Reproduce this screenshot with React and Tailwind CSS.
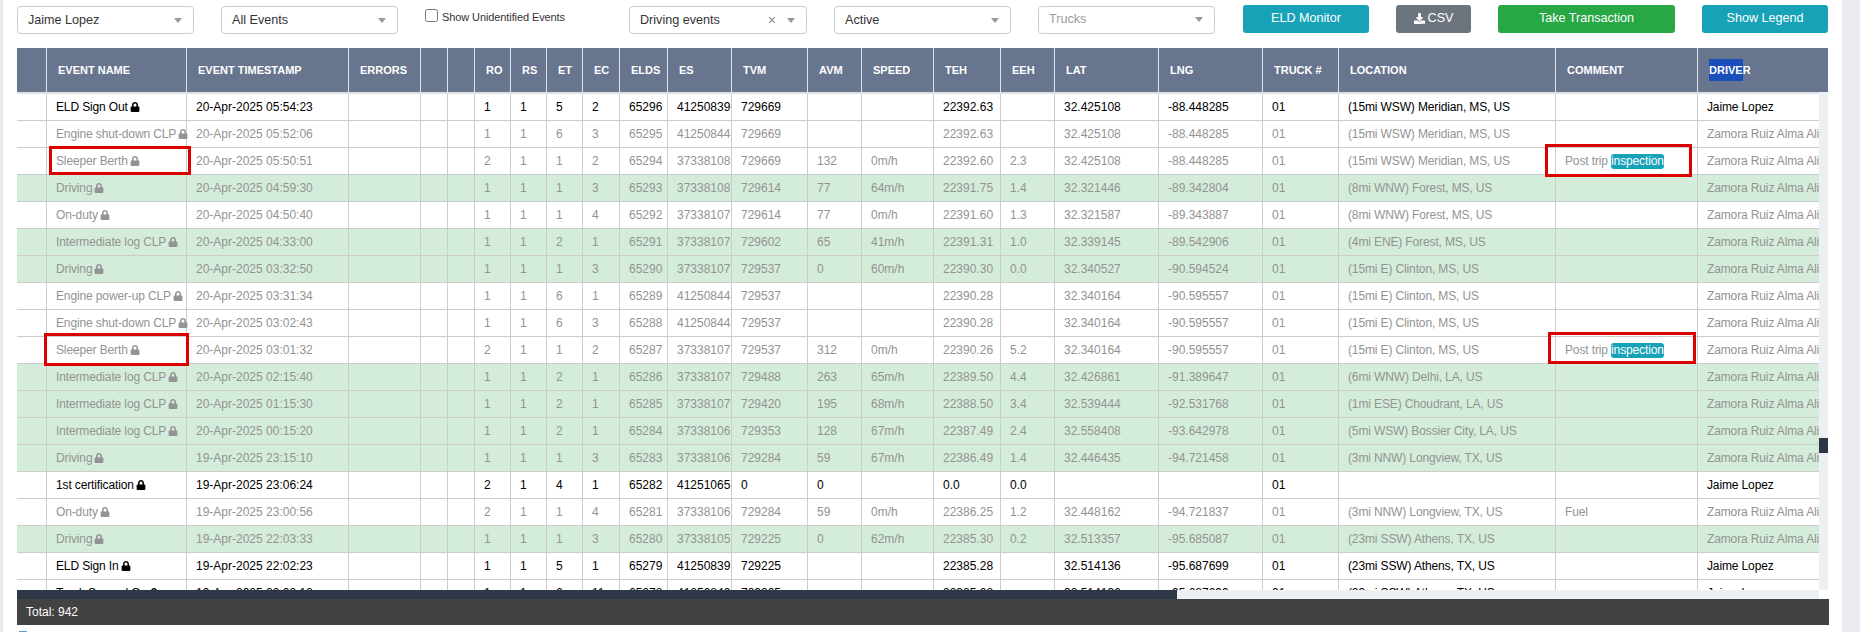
import React from "react";
import { FaLock, FaDownload } from "react-icons/fa";

const Z = "Zamora Ruiz Alma Alicia";
const J = "Jaime Lopez";
const MER = "(15mi WSW) Meridian, MS, US";
const CLI = "(15mi E) Clinton, MS, US";
const INT = "Intermediate log CLP";
const A20 = "20-Apr-2025 ";
const A19 = "19-Apr-2025 ";
const INSP = "__inspection__";

// kind: k = black row, g = grey row on white, s = grey row on green
const rows = [
  ["k", "ELD Sign Out", A20 + "05:54:23", 1, 1, 5, 2, 65296, 41250839, 729669, "", "", "22392.63", "", "32.425108", "-88.448285", MER, "", J],
  ["g", "Engine shut-down CLP", A20 + "05:52:06", 1, 1, 6, 3, 65295, 41250844, 729669, "", "", "22392.63", "", "32.425108", "-88.448285", MER, "", Z],
  ["g", "Sleeper Berth", A20 + "05:50:51", 2, 1, 1, 2, 65294, 37338108, 729669, 132, "0m/h", "22392.60", "2.3", "32.425108", "-88.448285", MER, INSP, Z],
  ["s", "Driving", A20 + "04:59:30", 1, 1, 1, 3, 65293, 37338108, 729614, 77, "64m/h", "22391.75", "1.4", "32.321446", "-89.342804", "(8mi WNW) Forest, MS, US", "", Z],
  ["g", "On-duty", A20 + "04:50:40", 1, 1, 1, 4, 65292, 37338107, 729614, 77, "0m/h", "22391.60", "1.3", "32.321587", "-89.343887", "(8mi WNW) Forest, MS, US", "", Z],
  ["s", INT, A20 + "04:33:00", 1, 1, 2, 1, 65291, 37338107, 729602, 65, "41m/h", "22391.31", "1.0", "32.339145", "-89.542906", "(4mi ENE) Forest, MS, US", "", Z],
  ["s", "Driving", A20 + "03:32:50", 1, 1, 1, 3, 65290, 37338107, 729537, 0, "60m/h", "22390.30", "0.0", "32.340527", "-90.594524", CLI, "", Z],
  ["g", "Engine power-up CLP", A20 + "03:31:34", 1, 1, 6, 1, 65289, 41250844, 729537, "", "", "22390.28", "", "32.340164", "-90.595557", CLI, "", Z],
  ["g", "Engine shut-down CLP", A20 + "03:02:43", 1, 1, 6, 3, 65288, 41250844, 729537, "", "", "22390.28", "", "32.340164", "-90.595557", CLI, "", Z],
  ["g", "Sleeper Berth", A20 + "03:01:32", 2, 1, 1, 2, 65287, 37338107, 729537, 312, "0m/h", "22390.26", "5.2", "32.340164", "-90.595557", CLI, INSP, Z],
  ["s", INT, A20 + "02:15:40", 1, 1, 2, 1, 65286, 37338107, 729488, 263, "65m/h", "22389.50", "4.4", "32.426861", "-91.389647", "(6mi WNW) Delhi, LA, US", "", Z],
  ["s", INT, A20 + "01:15:30", 1, 1, 2, 1, 65285, 37338107, 729420, 195, "68m/h", "22388.50", "3.4", "32.539444", "-92.531768", "(1mi ESE) Choudrant, LA, US", "", Z],
  ["s", INT, A20 + "00:15:20", 1, 1, 2, 1, 65284, 37338106, 729353, 128, "67m/h", "22387.49", "2.4", "32.558408", "-93.642978", "(5mi WSW) Bossier City, LA, US", "", Z],
  ["s", "Driving", A19 + "23:15:10", 1, 1, 1, 3, 65283, 37338106, 729284, 59, "67m/h", "22386.49", "1.4", "32.446435", "-94.721458", "(3mi NNW) Longview, TX, US", "", Z],
  ["k", "1st certification", A19 + "23:06:24", 2, 1, 4, 1, 65282, 41251065, 0, 0, "", "0.0", "0.0", "", "", "", "", J],
  ["g", "On-duty", A19 + "23:00:56", 2, 1, 1, 4, 65281, 37338106, 729284, 59, "0m/h", "22386.25", "1.2", "32.448162", "-94.721837", "(3mi NNW) Longview, TX, US", "Fuel", Z],
  ["s", "Driving", A19 + "22:03:33", 1, 1, 1, 3, 65280, 37338105, 729225, 0, "62m/h", "22385.30", "0.2", "32.513357", "-95.685087", "(23mi SSW) Athens, TX, US", "", Z],
  ["k", "ELD Sign In", A19 + "22:02:23", 1, 1, 5, 1, 65279, 41250839, 729225, "", "", "22385.28", "", "32.514136", "-95.687699", "(23mi SSW) Athens, TX, US", "", J],
  ["k", "Truck Sensed On", A19 + "22:02:12", 1, 1, 6, 11, 65278, 41250840, 729225, "", "", "22385.28", "", "32.514136", "-95.687699", "(23mi SSW) Athens, TX, US", "", J],
];

const heads = [
  ["", "w-[30px]"],
  ["EVENT NAME", "w-[140px]"],
  ["EVENT TIMESTAMP", "w-[162px]"],
  ["ERRORS", "w-[72px]"],
  ["", "w-[27px]"],
  ["", "w-[27px]"],
  ["RO", "w-[36px]"],
  ["RS", "w-[36px]"],
  ["ET", "w-[36px]"],
  ["EC", "w-[37px]"],
  ["ELDS", "w-[48px]"],
  ["ES", "w-[64px]"],
  ["TVM", "w-[76px]"],
  ["AVM", "w-[54px]"],
  ["SPEED", "w-[72px]"],
  ["TEH", "w-[67px]"],
  ["EEH", "w-[54px]"],
  ["LAT", "w-[104px]"],
  ["LNG", "w-[104px]"],
  ["TRUCK #", "w-[76px]"],
  ["LOCATION", "w-[217px]"],
  ["COMMENT", "w-[142px]"],
  ["DRIVER", "w-[200px]"],
];

const Caret = () => (
  <span className="w-0 h-0 border-l-[4px] border-r-[4px] border-t-[5px] border-l-transparent border-r-transparent border-t-[#999999]" />
);

function Select({ value, width, placeholder, clear }) {
  return (
    <div className={`${width} h-[28px] mt-px flex items-center justify-between bg-white border border-[#cccccc] rounded-[4px] pl-[10px] pr-[11px] text-[12.6px] ${placeholder ? "text-[#9b9b9b] pb-[2px]" : "text-[#333333]"}`}>
      <span>{value}</span>
      <span className="flex items-center gap-[11px]">
        {clear && <span className="text-[#888888] text-[14px] leading-none">×</span>}
        <Caret />
      </span>
    </div>
  );
}

function Button({ children, width, color }) {
  return (
    <div className={`${width} ${color} h-[28px] rounded-[3px] flex items-center justify-center gap-[3px] text-white text-[12.6px] pb-px`}>
      {children}
    </div>
  );
}

function Row({ r }) {
  const [kind, name, ts, ro, rs, et, ec, elds, es, tvm, avm, speed, teh, eeh, lat, lng, loc, comment, driver] = r;
  const rowCls = kind === "s" ? "bg-[#d4edda]" : "bg-white";
  const textCls = kind === "k" ? "text-black" : "text-[#939393]";
  const narrow = (s) => <span className="tracking-[-0.13px]">{s}</span>;
  const cells = [
    "",
    <span className="inline-flex items-center gap-[2px] tracking-[-0.13px]">
      {name}
      <FaLock size={10} />
    </span>,
    ts, "", "", "", ro, rs, et, ec, elds, es, tvm, avm, speed, teh, eeh, lat, lng, "01",
    narrow(loc),
    comment === INSP ? (
      <span className="tracking-[-0.13px]">
        Post trip{" "}
        <span className="bg-[#17a2b8] text-white rounded-[3px] inline-block leading-[15px]">inspection</span>
      </span>
    ) : narrow(comment),
    narrow(driver),
  ];
  return (
    <tr className={`${rowCls} ${textCls}`}>
      {cells.map((c, i) => (
        <td key={i} className="h-[27px] p-0 pl-[9px] border-r border-b border-[#cccccc] whitespace-nowrap last:border-r-0">
          {c}
        </td>
      ))}
    </tr>
  );
}

export default function App() {
  return (
    <div className="relative flex h-[632px] w-[1860px] overflow-hidden bg-white font-['Liberation_Sans',Arial,sans-serif] text-[12px]">
      <div className="w-[3px] bg-[#eaebf2]" />
      <div className="w-[1839px] pl-[14px] pr-[14px]">
        <div className="h-[48px] flex items-start gap-[27px] pt-[5px]">
          <Select value="Jaime Lopez" width="w-[177px]" />
          <Select value="All Events" width="w-[177px]" />
          <label className="w-[177px] flex items-start gap-[4px] text-[11px] tracking-[-0.1px] text-[#333333] pt-[4px]">
            <input type="checkbox" className="w-[13px] h-[13px] m-0 shrink-0" readOnly />
            <span className="leading-[16px]">Show Unidentified Events</span>
          </label>
          <Select value="Driving events" width="w-[178px]" clear />
          <Select value="Active" width="w-[177px]" />
          <Select value="Trucks" width="w-[177px]" placeholder />
          <Button width="w-[126px] ml-px" color="bg-[#17a2b8]">ELD Monitor</Button>
          <Button width="w-[75px]" color="bg-[#6c757d]">
            <FaDownload size={11} />
            <span>CSV</span>
          </Button>
          <Button width="w-[177px]" color="bg-[#28a745]">Take Transaction</Button>
          <Button width="w-[126px]" color="bg-[#17a2b8]">Show Legend</Button>
        </div>

        <div className="relative h-[542px] overflow-hidden">
          <table className="table-fixed w-[1881px] border-separate border-spacing-0 text-left">
            <thead>
              <tr>
                {heads.map(([h, w], i) => (
                  <th key={i} className={`${w} h-[46px] p-0 pl-[11px] bg-[#68758e] text-white text-[11px] font-bold border-r border-b-2 border-r-[#dfe3e8] border-b-[#dee2e6] whitespace-nowrap last:border-r-0`}>
                    {h === "DRIVER" ? (
                      <span>
                        <span className="bg-[#1a4fbb] inline-block leading-[22px]">DRIVE</span>R
                      </span>
                    ) : h}
                  </th>
                ))}
              </tr>
            </thead>
            <tbody>
              {rows.map((r, i) => <Row key={i} r={r} />)}
            </tbody>
          </table>
          <div className="absolute right-0 top-[44px] bottom-0 w-[9px] bg-[#ecf0f3]">
            <div className="mt-[346px] h-[15px] bg-[#2d3748]" />
          </div>
        </div>

        <div className="flex h-[9px]">
          <div className="w-[1160px] bg-[#2d3748]" />
          <div className="w-[642px] bg-[#ecf0f3]" />
        </div>
        <div className="h-[26px] w-[1812px] bg-[#424242] text-white flex items-center pl-[9px]">Total: 942</div>
        <div className="mt-[6px] ml-[2px] w-[8px] h-[2px] bg-[#5b9bd5]" />
      </div>
      <div className="w-[18px] bg-[#eaebf2]" />

      <div className="absolute left-[49px] top-[146px] w-[142px] h-[29px] border-[3px] border-[#dc0000]" />
      <div className="absolute left-[44px] top-[333px] w-[145px] h-[33px] border-[3px] border-[#dc0000]" />
      <div className="absolute left-[1545px] top-[144px] w-[147px] h-[33px] border-[3px] border-[#dc0000]" />
      <div className="absolute left-[1548px] top-[332px] w-[148px] h-[32px] border-[3px] border-[#dc0000]" />
    </div>
  );
}
